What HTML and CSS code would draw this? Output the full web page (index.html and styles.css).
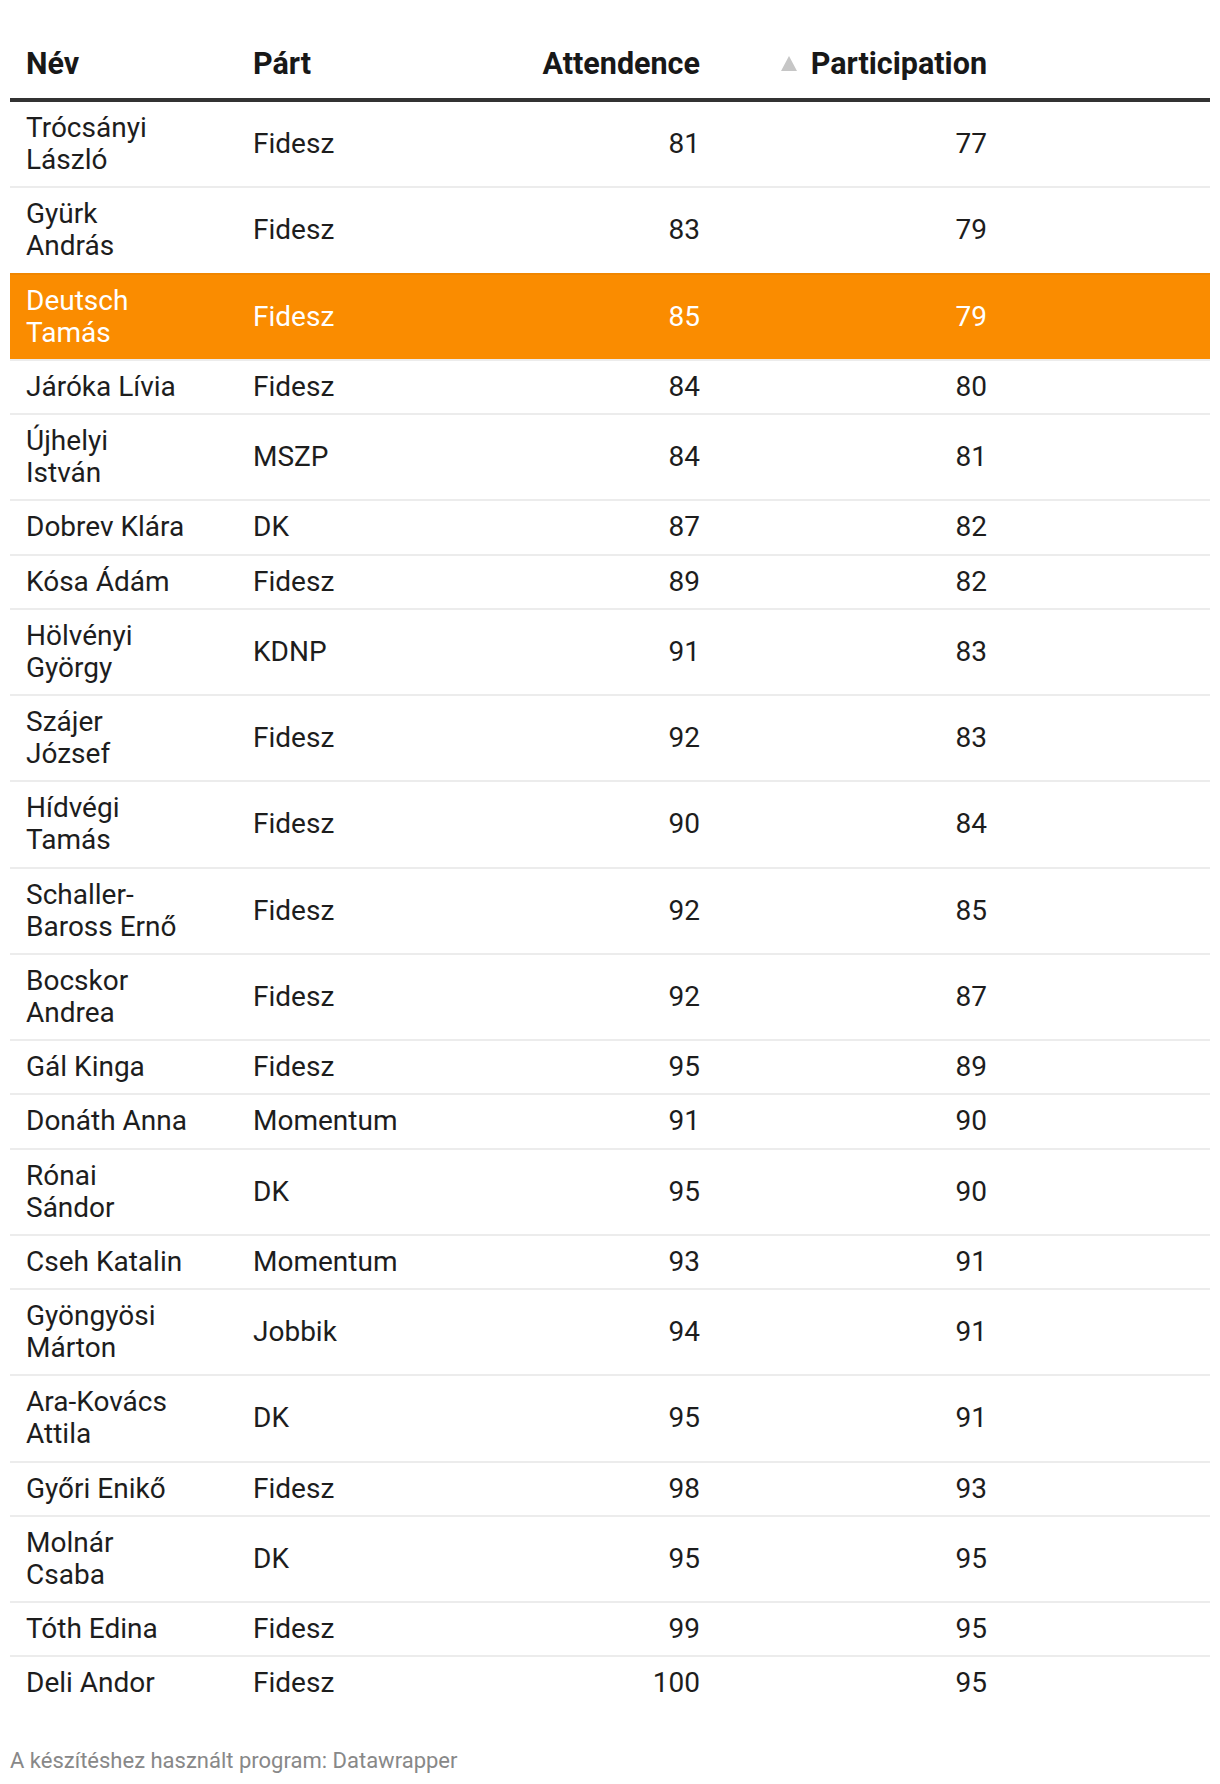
FILE: index.html
```html
<!DOCTYPE html>
<html lang="hu">
<head>
<meta charset="utf-8">
<title>Attendence</title>
<link rel="stylesheet" href="styles.css">
</head>
<body>
<div class="chart">
  <table class="dw-table">
    <colgroup>
      <col class="c-name"><col class="c-party"><col class="c-att"><col class="c-part"><col class="c-empty">
    </colgroup>
    <thead>
      <tr>
        <th class="name">Név</th>
        <th class="party">Párt</th>
        <th class="num">Attendence</th>
        <th class="num"><span class="sort-arrow"></span>Participation</th>
        <th class="empty"></th>
      </tr>
    </thead>
    <tbody>
      <tr><td class="name">Trócsányi László</td><td class="party">Fidesz</td><td class="num">81</td><td class="num">77</td><td></td></tr>
      <tr class="before-hl"><td class="name">Gyürk András</td><td class="party">Fidesz</td><td class="num">83</td><td class="num">79</td><td></td></tr>
      <tr class="hl"><td class="name">Deutsch Tamás</td><td class="party">Fidesz</td><td class="num">85</td><td class="num">79</td><td></td></tr>
      <tr><td class="name">Járóka Lívia</td><td class="party">Fidesz</td><td class="num">84</td><td class="num">80</td><td></td></tr>
      <tr><td class="name">Újhelyi István</td><td class="party">MSZP</td><td class="num">84</td><td class="num">81</td><td></td></tr>
      <tr><td class="name">Dobrev Klára</td><td class="party">DK</td><td class="num">87</td><td class="num">82</td><td></td></tr>
      <tr><td class="name">Kósa Ádám</td><td class="party">Fidesz</td><td class="num">89</td><td class="num">82</td><td></td></tr>
      <tr><td class="name">Hölvényi György</td><td class="party">KDNP</td><td class="num">91</td><td class="num">83</td><td></td></tr>
      <tr><td class="name">Szájer József</td><td class="party">Fidesz</td><td class="num">92</td><td class="num">83</td><td></td></tr>
      <tr><td class="name">Hídvégi Tamás</td><td class="party">Fidesz</td><td class="num">90</td><td class="num">84</td><td></td></tr>
      <tr><td class="name">Schaller-Baross Ernő</td><td class="party">Fidesz</td><td class="num">92</td><td class="num">85</td><td></td></tr>
      <tr><td class="name">Bocskor Andrea</td><td class="party">Fidesz</td><td class="num">92</td><td class="num">87</td><td></td></tr>
      <tr><td class="name">Gál Kinga</td><td class="party">Fidesz</td><td class="num">95</td><td class="num">89</td><td></td></tr>
      <tr><td class="name">Donáth Anna</td><td class="party">Momentum</td><td class="num">91</td><td class="num">90</td><td></td></tr>
      <tr><td class="name">Rónai Sándor</td><td class="party">DK</td><td class="num">95</td><td class="num">90</td><td></td></tr>
      <tr><td class="name">Cseh Katalin</td><td class="party">Momentum</td><td class="num">93</td><td class="num">91</td><td></td></tr>
      <tr><td class="name">Gyöngyösi Márton</td><td class="party">Jobbik</td><td class="num">94</td><td class="num">91</td><td></td></tr>
      <tr><td class="name">Ara-Kovács Attila</td><td class="party">DK</td><td class="num">95</td><td class="num">91</td><td></td></tr>
      <tr><td class="name">Győri Enikő</td><td class="party">Fidesz</td><td class="num">98</td><td class="num">93</td><td></td></tr>
      <tr><td class="name">Molnár Csaba</td><td class="party">DK</td><td class="num">95</td><td class="num">95</td><td></td></tr>
      <tr><td class="name">Tóth Edina</td><td class="party">Fidesz</td><td class="num">99</td><td class="num">95</td><td></td></tr>
      <tr class="last"><td class="name">Deli Andor</td><td class="party">Fidesz</td><td class="num">100</td><td class="num">95</td><td></td></tr>
    </tbody>
  </table>
  <div class="footer">A készítéshez használt program: Datawrapper</div>
</div>
</body>
</html>
```

FILE: styles.css
```css
html, body {
  margin: 0;
  padding: 0;
  background: #ffffff;
}

body {
  font-family: Roboto, "Liberation Sans", Arial, sans-serif;
  color: #181818;
}

.chart {
  padding: 10px 10px 0 10px;
  width: 1200px;
}

.dw-table {
  width: 1200px;
  table-layout: fixed;
  border-collapse: separate;
  border-spacing: 0;
  font-size: 28px;
  line-height: 32px;
}

.c-name { width: 227px; }
.c-party { width: 250px; }
.c-att { width: 229px; }
.c-part { width: 287px; }
.c-empty { width: 207px; }

th {
  font-size: 30.5px;
  font-weight: 700;
  text-align: left;
  padding: 38px 16px 18px 16px;
  border-bottom: 4px solid #333333;
  vertical-align: bottom;
  color: #181818;
}

td {
  padding: 10px 16px 10.25px 16px;
  border-bottom: 2px solid #ececec;
  vertical-align: middle;
  color: #1d1d1d;
}

td.name, th.name {
  padding-right: 48px;
}

.num {
  text-align: right;
}

th.num {
  text-align: right;
}

.sort-arrow {
  display: inline-block;
  width: 0;
  height: 0;
  border-left: 8px solid transparent;
  border-right: 8px solid transparent;
  border-bottom: 15px solid #c6c6c6;
  margin-right: 14px;
  vertical-align: 3px;
}

tr.hl td {
  background: #fa8c00;
  color: #ffffff;
}

tr.before-hl td {
  border-bottom-color: #f08600;
}

tr.last td {
  border-bottom: none;
}

.footer {
  margin-top: 39px;
  font-size: 22px;
  line-height: 24px;
  color: #888888;
  padding-bottom: 10px;
}
```
